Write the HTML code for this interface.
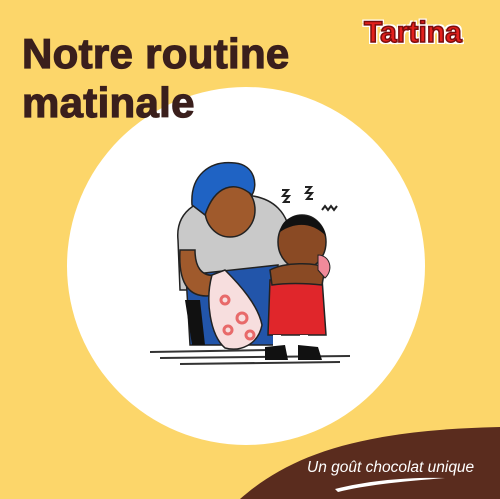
<!DOCTYPE html>
<html><head><meta charset="utf-8"><style>
html,body{margin:0;padding:0}
body{width:500px;height:499px;overflow:hidden;position:relative;background:#fcd66a;font-family:"Liberation Sans",sans-serif}
.t{position:absolute;left:22px;top:29px;font-weight:bold;font-size:42px;line-height:49px;color:#3a1f1c;-webkit-text-stroke:1.2px #3a1f1c;letter-spacing:0.3px}
.logo{position:absolute;left:364px;top:16px;font-weight:bold;font-size:30px;color:#e3201c;-webkit-text-stroke:1.5px #7a0d0d;text-shadow:2px 2px 0 #fff,-2px -2px 0 #fff,2px -2px 0 #fff,-2px 2px 0 #fff;letter-spacing:0px}
.slog{position:absolute;left:307px;top:459px;font-style:italic;font-size:15.5px;color:#fff}
</style></head><body>
<svg width="500" height="499" style="position:absolute;left:0;top:0">
<circle cx="246" cy="266" r="179" fill="#fff"/>
<path d="M240 499 C290 455 360 430 500 427 L500 499 Z" fill="#5a2c1e"/>
<path d="M335 489 C370 480 410 477 445 478 C410 481 370 484 338 492Z" fill="#fff"/>
<g stroke="#333" stroke-width="2">
<line x1="150" y1="352" x2="270" y2="350"/><line x1="160" y1="358" x2="350" y2="356"/><line x1="180" y1="364" x2="340" y2="362"/>
</g>
<path d="M178 240 C175 210 200 195 240 195 C275 195 290 215 290 240 L285 290 L180 290Z" fill="#c9c9c9" stroke="#222" stroke-width="1.5"/>
<path d="M186 275 L278 265 L275 345 L190 345Z" fill="#2255aa" stroke="#222" stroke-width="1.5"/>
<path d="M185 300 L192 345 L205 345 L200 300Z" fill="#111"/>
<ellipse cx="230" cy="210" rx="25" ry="27" fill="#a05a2c" stroke="#222" stroke-width="1.5"/>
<path d="M192 205 C190 175 210 160 235 163 C255 165 258 185 252 195 C235 180 215 185 205 215Z" fill="#1f63c4" stroke="#222" stroke-width="1.5"/>
<path d="M180 250 C178 285 190 300 215 295 L218 275 C200 278 195 265 195 250Z" fill="#a05a2c" stroke="#222" stroke-width="1.5"/>
<path d="M212 275 C205 300 210 335 225 348 C240 352 258 345 262 325 C258 305 240 285 225 270Z" fill="#f7dede" stroke="#222" stroke-width="1.5"/>
<g fill="none" stroke="#e86a6a" stroke-width="3"><circle cx="225" cy="300" r="4"/><circle cx="242" cy="318" r="5"/><circle cx="228" cy="330" r="4"/><circle cx="250" cy="335" r="4"/></g>
<path d="M270 280 L322 278 L326 335 L268 335Z" fill="#e0262b" stroke="#222" stroke-width="1.5"/>
<rect x="273" y="335" width="8" height="12" fill="#fff"/><rect x="300" y="335" width="8" height="12" fill="#fff"/>
<path d="M265 347 L285 345 L288 360 L265 360Z M298 345 L318 347 L322 360 L298 360Z" fill="#111"/>
<ellipse cx="302" cy="242" rx="24" ry="27" fill="#8a4a24" stroke="#222" stroke-width="1.5"/>
<path d="M280 232 C282 210 320 208 326 236 C312 222 295 222 280 232Z" fill="#111"/>
<path d="M270 270 C285 262 315 262 325 268 L322 285 C305 283 285 283 272 285Z" fill="#8a4a24" stroke="#222" stroke-width="1.5"/>
<path d="M318 255 C330 255 334 270 325 278 L318 270Z" fill="#f08a9a" stroke="#222" stroke-width="1"/>
<g fill="none" stroke="#222" stroke-width="2">
<path d="M282 190 l6 0 l-5 6 l6 0 l-5 6 l6 0"/><path d="M305 187 l6 0 l-5 6 l6 0 l-5 6 l6 0"/><path d="M322 210 l3 -4 l3 4 l3 -4 l3 4 l3 -4"/>
</g>
</svg>
<div class="t">Notre routine<br>matinale</div>
<div class="logo">Tartina</div>
<div class="slog">Un goût chocolat unique</div>
</body></html>
